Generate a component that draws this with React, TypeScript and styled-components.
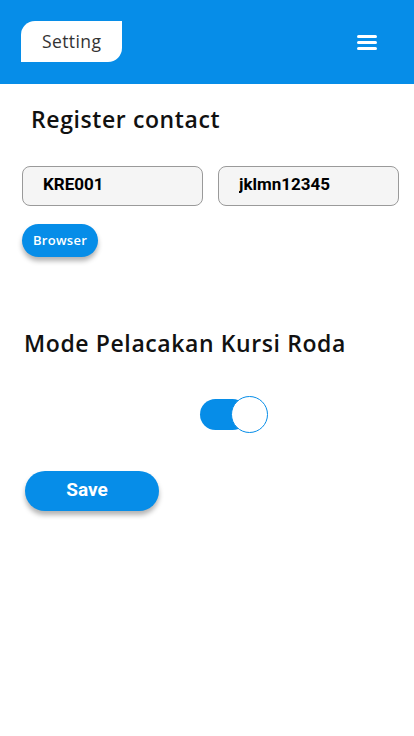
import styled, { createGlobalStyle } from "styled-components";
import { useState } from "react";

const GlobalStyle = createGlobalStyle`
  html, body {
    margin: 0;
    padding: 0;
    background: #fff;
  }
  * {
    box-sizing: border-box;
  }
`;

const BLUE = "#068de8";
const ROUND_FONT = '"Open Sans", "Noto Sans", sans-serif';
const ROBOTO = 'Roboto, "Liberation Sans", sans-serif';

const Page = styled.div`
  width: 414px;
  min-height: 736px;
  background: #fff;
  font-family: ${ROUND_FONT};
`;

const Header = styled.header`
  height: 84px;
  background: ${BLUE};
  display: flex;
  align-items: center;
  justify-content: space-between;
  padding: 0 37px 0 21px;
`;

const TitleTab = styled.div`
  width: 101px;
  height: 41px;
  margin-top: -1px;
  background: #fff;
  border-radius: 14px 0 14px 0;
  display: flex;
  align-items: center;
  padding-left: 21px;
  padding-bottom: 1px;
  color: #333;
  font-size: 17.5px;
  font-weight: 500;
  letter-spacing: 0.4px;
`;

const MenuButton = styled.button`
  border: none;
  background: none;
  padding: 0;
  display: flex;
  flex-direction: column;
  gap: 3px;
  cursor: pointer;
`;

const MenuBar = styled.span`
  display: block;
  width: 20px;
  height: 3px;
  border-radius: 2px;
  background: #fff;
`;

const Content = styled.main`
  display: flex;
  flex-direction: column;
  padding-top: 20px;
`;

const SectionTitle = styled.h2<{ $indent: number }>`
  margin: 0;
  padding-left: ${(p) => p.$indent}px;
  font-size: 23px;
  line-height: 30px;
  font-weight: 600;
  color: #111;
  letter-spacing: 0.6px;
`;

const InputRow = styled.div`
  display: flex;
  gap: 15px;
  padding: 0 15px 0 22px;
  margin-top: 32px;
`;

const TextInput = styled.input`
  flex: 1;
  min-width: 0;
  height: 40px;
  border: 1px solid #9a9a9a;
  border-radius: 8px;
  background: #f5f5f5;
  padding: 0 0 5px 20px;
  font-family: ${ROBOTO};
  font-weight: 700;
  font-size: 17px;
  color: #000;
  outline: none;
`;

const PillButton = styled.button<{ $w: number; $h: number; $size: number; $shift?: number }>`
  width: ${(p) => p.$w}px;
  height: ${(p) => p.$h}px;
  border: none;
  border-radius: ${(p) => p.$h / 2}px;
  background: ${BLUE};
  color: #fff;
  font-size: ${(p) => p.$size}px;
  box-shadow: 0 4px 5px rgba(0, 0, 0, 0.3);
  cursor: pointer;
  padding: 0 ${(p) => p.$shift ?? 0}px 0 0;
`;

const BrowserButton = styled(PillButton)`
  font-family: ${ROUND_FONT};
  font-weight: 600;
  letter-spacing: 0.3px;
  padding-bottom: 2px;
`;

const SaveButton = styled(PillButton)`
  font-family: ${ROBOTO};
  font-weight: 700;
  padding-bottom: 4px;
`;

const BrowserWrap = styled.div`
  padding-left: 22px;
  margin-top: 18px;
`;

const ModeBlock = styled.div`
  margin-top: 71px;
`;

const ToggleRow = styled.div`
  display: flex;
  padding-left: 200px;
  margin-top: 41px;
`;

const Track = styled.button<{ $on: boolean }>`
  position: relative;
  width: 48px;
  height: 31px;
  border: none;
  border-radius: 16px;
  background: ${(p) => (p.$on ? BLUE : "#bbb")};
  padding: 0;
  cursor: pointer;
`;

const Knob = styled.span<{ $on: boolean }>`
  position: absolute;
  top: -3px;
  left: ${(p) => (p.$on ? "31px" : "-6px")};
  width: 37px;
  height: 37px;
  border-radius: 50%;
  background: #fff;
  border: 1.5px solid ${BLUE};
`;

const SaveWrap = styled.div`
  padding-left: 25px;
  margin-top: 41px;
`;

export default function App() {
  const [on, setOn] = useState(true);
  const [id, setId] = useState("KRE001");
  const [pass, setPass] = useState("jklmn12345");

  return (
    <>
      <GlobalStyle />
      <Page>
        <Header>
          <TitleTab>Setting</TitleTab>
          <MenuButton aria-label="menu">
            <MenuBar />
            <MenuBar />
            <MenuBar />
          </MenuButton>
        </Header>
        <Content>
          <SectionTitle $indent={31}>Register contact</SectionTitle>
          <InputRow>
            <TextInput value={id} onChange={(e) => setId(e.target.value)} />
            <TextInput value={pass} onChange={(e) => setPass(e.target.value)} />
          </InputRow>
          <BrowserWrap>
            <BrowserButton $w={76} $h={33} $size={13}>
              Browser
            </BrowserButton>
          </BrowserWrap>
          <ModeBlock>
            <SectionTitle $indent={24}>Mode Pelacakan Kursi Roda</SectionTitle>
          </ModeBlock>
          <ToggleRow>
            <Track $on={on} onClick={() => setOn(!on)} aria-label="toggle">
              <Knob $on={on} />
            </Track>
          </ToggleRow>
          <SaveWrap>
            <SaveButton $w={134} $h={40} $size={19} $shift={10}>
              Save
            </SaveButton>
          </SaveWrap>
        </Content>
      </Page>
    </>
  );
}
